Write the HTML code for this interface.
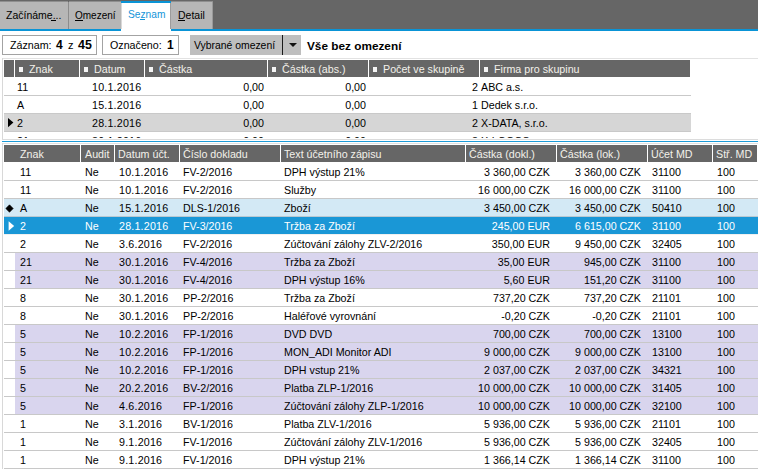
<!DOCTYPE html>
<html><head><meta charset="utf-8"><style>
*{margin:0;padding:0;box-sizing:border-box}
html,body{width:758px;height:469px;overflow:hidden;background:#fff}
body{position:relative;font-family:"Liberation Sans",sans-serif;font-size:10.7px;color:#000}
.a{position:absolute}
.t{position:absolute;white-space:nowrap;line-height:17px;height:17px}
.r{text-align:right}
.hd{color:#f3f1ea}
u{text-decoration:none;border-bottom:1px solid currentColor}
</style></head><body>
<div class="a" style="left:0px;top:0px;width:758px;height:29px;background:#666666;"></div>
<div class="a" style="left:0px;top:1px;width:68px;height:28px;background:#8e8e8e;"></div>
<div class="a" style="left:0px;top:2px;width:68px;height:27px;background:#b6b6b6;"></div>
<div class="a" style="left:68px;top:2px;width:1px;height:27px;background:#8c8c8c;"></div>
<div class="a" style="left:69px;top:1px;width:52px;height:28px;background:#8e8e8e;"></div>
<div class="a" style="left:69px;top:2px;width:52px;height:27px;background:#b6b6b6;"></div>
<div class="a" style="left:170px;top:1px;width:43px;height:28px;background:#8e8e8e;"></div>
<div class="a" style="left:171px;top:2px;width:41px;height:27px;background:#b6b6b6;"></div>
<div class="a" style="left:170px;top:2px;width:1px;height:27px;background:#9c9c9c;"></div>
<div class="a" style="left:212px;top:2px;width:1px;height:27px;background:#9a9a9a;"></div>
<div class="a" style="left:0px;top:29px;width:122px;height:2px;background:#0a94d6;"></div>
<div class="a" style="left:171px;top:29px;width:587px;height:2px;background:#0a94d6;"></div>
<div class="a" style="left:121px;top:1px;width:49px;height:30px;background:#ffffff;"></div>
<div class="a" style="left:121px;top:3px;width:1px;height:26px;background:#d8d8d8;"></div>
<div class="a" style="left:121px;top:1px;width:50px;height:2px;background:#0a94d6;"></div>
<div class="t" style="left:6px;top:7px;color:#000;font-size:10.5px">Začínáme...</div>
<div class="a" style="left:51px;top:20px;width:5px;height:1px;background:#000;"></div>
<div class="t" style="left:75px;top:7px;color:#000;font-size:10px">Omezení</div>
<div class="a" style="left:75px;top:20px;width:8px;height:1px;background:#000;"></div>
<div class="t" style="left:128px;top:6px;color:#1495d8;font-size:10.2px">Seznam</div>
<div class="a" style="left:140px;top:19px;width:5px;height:1px;background:#1495d8;"></div>
<div class="t" style="left:178px;top:7px;color:#000;font-size:10.5px">Detail</div>
<div class="a" style="left:178px;top:20px;width:7px;height:1px;background:#000;"></div>
<div class="a" style="left:2px;top:35px;width:95px;height:20px;background:#fff;border:1px solid #a3a3a3"></div>
<div class="t" style="left:10px;top:37px;">Záznam:</div>
<div class="t" style="left:56px;top:37px;font-size:12px"><b>4</b></div>
<div class="t" style="left:68px;top:37px;font-size:11px">z</div>
<div class="t" style="left:78px;top:37px;font-size:12.4px"><b>45</b></div>
<div class="a" style="left:102px;top:35px;width:77px;height:20px;background:#fff;border:1px solid #a3a3a3"></div>
<div class="t" style="left:110px;top:37px;">Označeno:</div>
<div class="t" style="left:167px;top:37px;font-size:12px"><b>1</b></div>
<div class="a" style="left:190px;top:35px;width:111px;height:20px;background:#bebebe;"></div>
<div class="a" style="left:282px;top:35px;width:1px;height:20px;background:#1a1a1a;"></div>
<div class="t" style="left:194px;top:37px;color:#000;font-size:10.4px">Vybrané omezení</div>
<svg class="a" style="left:289px;top:43px" width="8" height="5"><path d="M0 0H8L4 4Z" fill="#111"/></svg>
<div class="t" style="left:307px;top:38px;font-size:11.8px"><b>Vše bez omezení</b></div>
<div class="a" style="left:2px;top:58px;width:756px;height:1px;background:#e2e2e2;"></div>
<div class="a" style="left:2px;top:58px;width:1px;height:82px;background:#d8d8d8;"></div>
<div class="a" style="left:2px;top:139px;width:756px;height:1px;background:#dcdcdc;"></div>
<div class="a" style="left:4px;top:60px;width:686px;height:17px;background:#666666;"></div>
<div class="a" style="left:14px;top:60px;width:1px;height:17px;background:#ffffff;"></div>
<div class="a" style="left:79px;top:60px;width:1px;height:17px;background:#ffffff;"></div>
<div class="a" style="left:144px;top:60px;width:1px;height:17px;background:#ffffff;"></div>
<div class="a" style="left:267px;top:60px;width:1px;height:17px;background:#ffffff;"></div>
<div class="a" style="left:368px;top:60px;width:1px;height:17px;background:#ffffff;"></div>
<div class="a" style="left:479px;top:60px;width:1px;height:17px;background:#ffffff;"></div>
<div class="a" style="left:19px;top:67px;width:4px;height:5px;background:#f4f4f4;"></div>
<div class="t hd" style="left:29px;top:61px;">Znak</div>
<div class="a" style="left:84px;top:67px;width:4px;height:5px;background:#f4f4f4;"></div>
<div class="t hd" style="left:94px;top:61px;">Datum</div>
<div class="a" style="left:149px;top:67px;width:4px;height:5px;background:#f4f4f4;"></div>
<div class="t hd" style="left:159px;top:61px;">Částka</div>
<div class="a" style="left:272px;top:67px;width:4px;height:5px;background:#f4f4f4;"></div>
<div class="t hd" style="left:282px;top:61px;">Částka (abs.)</div>
<div class="a" style="left:373px;top:67px;width:4px;height:5px;background:#f4f4f4;"></div>
<div class="t hd" style="left:383px;top:61px;">Počet ve skupině</div>
<div class="a" style="left:484px;top:67px;width:4px;height:5px;background:#f4f4f4;"></div>
<div class="t hd" style="left:494px;top:61px;">Firma pro skupinu</div>
<div class="a" style="left:4px;top:114px;width:687px;height:18px;background:#d6d6d6;"></div>
<div class="a" style="left:4px;top:95px;width:687px;height:1px;background:#c9c9c9;"></div>
<div class="t" style="left:17px;top:79px;">11</div>
<div class="t" style="left:92px;top:79px;letter-spacing:0.2px">10.1.2016</div>
<div class="t r" style="left:64px;width:200px;top:79px;">0,00</div>
<div class="t r" style="left:166px;width:200px;top:79px;">0,00</div>
<div class="t r" style="left:278px;width:200px;top:79px;">2</div>
<div class="t" style="left:481px;top:79px;">ABC a.s.</div>
<div class="a" style="left:4px;top:113px;width:687px;height:1px;background:#c9c9c9;"></div>
<div class="t" style="left:17px;top:97px;">A</div>
<div class="t" style="left:92px;top:97px;letter-spacing:0.2px">15.1.2016</div>
<div class="t r" style="left:64px;width:200px;top:97px;">0,00</div>
<div class="t r" style="left:166px;width:200px;top:97px;">0,00</div>
<div class="t r" style="left:278px;width:200px;top:97px;">1</div>
<div class="t" style="left:481px;top:97px;">Dedek s.r.o.</div>
<div class="a" style="left:4px;top:131px;width:687px;height:1px;background:#c9c9c9;"></div>
<div class="t" style="left:17px;top:115px;">2</div>
<div class="t" style="left:92px;top:115px;letter-spacing:0.2px">28.1.2016</div>
<div class="t r" style="left:64px;width:200px;top:115px;">0,00</div>
<div class="t r" style="left:166px;width:200px;top:115px;">0,00</div>
<div class="t r" style="left:278px;width:200px;top:115px;">2</div>
<div class="t" style="left:481px;top:115px;">X-DATA, s.r.o.</div>
<div class="t" style="left:17px;top:133px;height:5px;overflow:hidden;">21</div>
<div class="t" style="left:92px;top:133px;height:5px;overflow:hidden;letter-spacing:0.2px">30.1.2016</div>
<div class="t r" style="left:64px;width:200px;top:133px;height:5px;overflow:hidden;">0,00</div>
<div class="t r" style="left:166px;width:200px;top:133px;height:5px;overflow:hidden;">0,00</div>
<div class="t r" style="left:278px;width:200px;top:133px;height:5px;overflow:hidden;">3</div>
<div class="t" style="left:481px;top:133px;height:5px;overflow:hidden;">X-LOGOS</div>
<svg class="a" style="left:8px;top:118px" width="6" height="10"><path d="M0 0L5.4 4.6L0 9.3Z" fill="#000"/></svg>
<div class="a" style="left:2px;top:141px;width:756px;height:1px;background:#1d9ad6;"></div>
<div class="a" style="left:2px;top:143px;width:756px;height:1px;background:#e2e2e2;"></div>
<div class="a" style="left:2px;top:143px;width:1px;height:326px;background:#d8d8d8;"></div>
<div class="a" style="left:4px;top:145px;width:753px;height:17px;background:#666666;"></div>
<div class="a" style="left:80px;top:145px;width:1px;height:17px;background:#ffffff;"></div>
<div class="a" style="left:114px;top:145px;width:1px;height:17px;background:#ffffff;"></div>
<div class="a" style="left:179px;top:145px;width:1px;height:17px;background:#ffffff;"></div>
<div class="a" style="left:280px;top:145px;width:1px;height:17px;background:#ffffff;"></div>
<div class="a" style="left:465px;top:145px;width:1px;height:17px;background:#ffffff;"></div>
<div class="a" style="left:556px;top:145px;width:1px;height:17px;background:#ffffff;"></div>
<div class="a" style="left:647px;top:145px;width:1px;height:17px;background:#ffffff;"></div>
<div class="a" style="left:712px;top:145px;width:1px;height:17px;background:#ffffff;"></div>
<div class="t hd" style="left:20px;top:146px;">Znak</div>
<div class="t hd" style="left:85px;top:146px;">Audit</div>
<div class="t hd" style="left:118px;top:146px;">Datum účt.</div>
<div class="t hd" style="left:183px;top:146px;">Číslo dokladu</div>
<div class="t hd" style="left:284px;top:146px;">Text účetního zápisu</div>
<div class="t hd" style="left:469px;top:146px;">Částka (dokl.)</div>
<div class="t hd" style="left:560px;top:146px;">Částka (lok.)</div>
<div class="t hd" style="left:651px;top:146px;">Účet MD</div>
<div class="t hd" style="left:716px;top:146px;">Stř. MD</div>
<div class="a" style="left:4px;top:180px;width:754px;height:1px;background:#c8c8c8;"></div>
<div class="t" style="left:20px;top:164px;color:#000">11</div>
<div class="t" style="left:85px;top:164px;color:#000">Ne</div>
<div class="t" style="left:119px;top:164px;color:#000;letter-spacing:0.2px">10.1.2016</div>
<div class="t" style="left:183px;top:164px;color:#000">FV-2/2016</div>
<div class="t" style="left:284px;top:164px;color:#000">DPH výstup 21%</div>
<div class="t r" style="left:350px;width:200px;top:164px;color:#000">3 360,00 CZK</div>
<div class="t r" style="left:441px;width:200px;top:164px;color:#000">3 360,00 CZK</div>
<div class="t" style="left:652px;top:164px;color:#000">31100</div>
<div class="t" style="left:717px;top:164px;color:#000">100</div>
<div class="a" style="left:4px;top:198px;width:754px;height:1px;background:#c8c8c8;"></div>
<div class="t" style="left:20px;top:182px;color:#000">11</div>
<div class="t" style="left:85px;top:182px;color:#000">Ne</div>
<div class="t" style="left:119px;top:182px;color:#000;letter-spacing:0.2px">10.1.2016</div>
<div class="t" style="left:183px;top:182px;color:#000">FV-2/2016</div>
<div class="t" style="left:284px;top:182px;color:#000">Služby</div>
<div class="t r" style="left:350px;width:200px;top:182px;color:#000">16 000,00 CZK</div>
<div class="t r" style="left:441px;width:200px;top:182px;color:#000">16 000,00 CZK</div>
<div class="t" style="left:652px;top:182px;color:#000">31100</div>
<div class="t" style="left:717px;top:182px;color:#000">100</div>
<div class="a" style="left:4px;top:199px;width:754px;height:17px;background:#d3e9f5;"></div>
<div class="a" style="left:4px;top:216px;width:754px;height:1px;background:#b9c9d2;"></div>
<div class="t" style="left:20px;top:200px;color:#000">A</div>
<div class="t" style="left:85px;top:200px;color:#000">Ne</div>
<div class="t" style="left:119px;top:200px;color:#000;letter-spacing:0.2px">15.1.2016</div>
<div class="t" style="left:183px;top:200px;color:#000">DLS-1/2016</div>
<div class="t" style="left:284px;top:200px;color:#000">Zboží</div>
<div class="t r" style="left:350px;width:200px;top:200px;color:#000">3 450,00 CZK</div>
<div class="t r" style="left:441px;width:200px;top:200px;color:#000">3 450,00 CZK</div>
<div class="t" style="left:652px;top:200px;color:#000">50410</div>
<div class="t" style="left:717px;top:200px;color:#000">100</div>
<svg class="a" style="left:5px;top:204px" width="9" height="9"><path d="M4.5 0.8L8.2 4.5L4.5 8.2L0.8 4.5Z" fill="#000" stroke="#000" stroke-width="0.6" stroke-linejoin="round"/></svg>
<div class="a" style="left:4px;top:217px;width:754px;height:17px;background:#1a97d6;"></div>
<div class="a" style="left:4px;top:234px;width:754px;height:1px;background:#f0f0f0;"></div>
<div class="t" style="left:20px;top:218px;color:#fff">2</div>
<div class="t" style="left:85px;top:218px;color:#fff">Ne</div>
<div class="t" style="left:119px;top:218px;color:#fff;letter-spacing:0.2px">28.1.2016</div>
<div class="t" style="left:183px;top:218px;color:#fff">FV-3/2016</div>
<div class="t" style="left:284px;top:218px;color:#fff">Tržba za Zboží</div>
<div class="t r" style="left:350px;width:200px;top:218px;color:#fff">245,00 EUR</div>
<div class="t r" style="left:441px;width:200px;top:218px;color:#fff">6 615,00 CZK</div>
<div class="t" style="left:652px;top:218px;color:#fff">31100</div>
<div class="t" style="left:717px;top:218px;color:#fff">100</div>
<svg class="a" style="left:8px;top:221px" width="7" height="11"><path d="M0.6 0.3L6.2 5L0.6 9.7Z" fill="#fff"/></svg>
<div class="a" style="left:4px;top:252px;width:754px;height:1px;background:#c8c8c8;"></div>
<div class="t" style="left:20px;top:236px;color:#000">2</div>
<div class="t" style="left:85px;top:236px;color:#000">Ne</div>
<div class="t" style="left:119px;top:236px;color:#000;letter-spacing:0.2px">3.6.2016</div>
<div class="t" style="left:183px;top:236px;color:#000">FV-2/2016</div>
<div class="t" style="left:284px;top:236px;color:#000">Zúčtování zálohy ZLV-2/2016</div>
<div class="t r" style="left:350px;width:200px;top:236px;color:#000">350,00 EUR</div>
<div class="t r" style="left:441px;width:200px;top:236px;color:#000">9 450,00 CZK</div>
<div class="t" style="left:652px;top:236px;color:#000">32405</div>
<div class="t" style="left:717px;top:236px;color:#000">100</div>
<div class="a" style="left:15px;top:253px;width:743px;height:17px;background:#d9d5ee;"></div>
<div class="a" style="left:4px;top:270px;width:754px;height:1px;background:#c8c8c8;"></div>
<div class="t" style="left:20px;top:254px;color:#000">21</div>
<div class="t" style="left:85px;top:254px;color:#000">Ne</div>
<div class="t" style="left:119px;top:254px;color:#000;letter-spacing:0.2px">30.1.2016</div>
<div class="t" style="left:183px;top:254px;color:#000">FV-4/2016</div>
<div class="t" style="left:284px;top:254px;color:#000">Tržba za Zboží</div>
<div class="t r" style="left:350px;width:200px;top:254px;color:#000">35,00 EUR</div>
<div class="t r" style="left:441px;width:200px;top:254px;color:#000">945,00 CZK</div>
<div class="t" style="left:652px;top:254px;color:#000">31100</div>
<div class="t" style="left:717px;top:254px;color:#000">100</div>
<div class="a" style="left:15px;top:271px;width:743px;height:17px;background:#d9d5ee;"></div>
<div class="a" style="left:4px;top:288px;width:754px;height:1px;background:#c8c8c8;"></div>
<div class="t" style="left:20px;top:272px;color:#000">21</div>
<div class="t" style="left:85px;top:272px;color:#000">Ne</div>
<div class="t" style="left:119px;top:272px;color:#000;letter-spacing:0.2px">30.1.2016</div>
<div class="t" style="left:183px;top:272px;color:#000">FV-4/2016</div>
<div class="t" style="left:284px;top:272px;color:#000">DPH výstup 16%</div>
<div class="t r" style="left:350px;width:200px;top:272px;color:#000">5,60 EUR</div>
<div class="t r" style="left:441px;width:200px;top:272px;color:#000">151,20 CZK</div>
<div class="t" style="left:652px;top:272px;color:#000">31100</div>
<div class="t" style="left:717px;top:272px;color:#000">100</div>
<div class="a" style="left:4px;top:306px;width:754px;height:1px;background:#c8c8c8;"></div>
<div class="t" style="left:20px;top:290px;color:#000">8</div>
<div class="t" style="left:85px;top:290px;color:#000">Ne</div>
<div class="t" style="left:119px;top:290px;color:#000;letter-spacing:0.2px">30.1.2016</div>
<div class="t" style="left:183px;top:290px;color:#000">PP-2/2016</div>
<div class="t" style="left:284px;top:290px;color:#000">Tržba za Zboží</div>
<div class="t r" style="left:350px;width:200px;top:290px;color:#000">737,20 CZK</div>
<div class="t r" style="left:441px;width:200px;top:290px;color:#000">737,20 CZK</div>
<div class="t" style="left:652px;top:290px;color:#000">21101</div>
<div class="t" style="left:717px;top:290px;color:#000">100</div>
<div class="a" style="left:4px;top:324px;width:754px;height:1px;background:#c8c8c8;"></div>
<div class="t" style="left:20px;top:308px;color:#000">8</div>
<div class="t" style="left:85px;top:308px;color:#000">Ne</div>
<div class="t" style="left:119px;top:308px;color:#000;letter-spacing:0.2px">30.1.2016</div>
<div class="t" style="left:183px;top:308px;color:#000">PP-2/2016</div>
<div class="t" style="left:284px;top:308px;color:#000">Haléřové vyrovnání</div>
<div class="t r" style="left:350px;width:200px;top:308px;color:#000">-0,20 CZK</div>
<div class="t r" style="left:441px;width:200px;top:308px;color:#000">-0,20 CZK</div>
<div class="t" style="left:652px;top:308px;color:#000">21101</div>
<div class="t" style="left:717px;top:308px;color:#000">100</div>
<div class="a" style="left:15px;top:325px;width:743px;height:17px;background:#d9d5ee;"></div>
<div class="a" style="left:4px;top:342px;width:754px;height:1px;background:#c8c8c8;"></div>
<div class="t" style="left:20px;top:326px;color:#000">5</div>
<div class="t" style="left:85px;top:326px;color:#000">Ne</div>
<div class="t" style="left:119px;top:326px;color:#000;letter-spacing:0.2px">10.2.2016</div>
<div class="t" style="left:183px;top:326px;color:#000">FP-1/2016</div>
<div class="t" style="left:284px;top:326px;color:#000">DVD DVD</div>
<div class="t r" style="left:350px;width:200px;top:326px;color:#000">700,00 CZK</div>
<div class="t r" style="left:441px;width:200px;top:326px;color:#000">700,00 CZK</div>
<div class="t" style="left:652px;top:326px;color:#000">13100</div>
<div class="t" style="left:717px;top:326px;color:#000">100</div>
<div class="a" style="left:15px;top:343px;width:743px;height:17px;background:#d9d5ee;"></div>
<div class="a" style="left:4px;top:360px;width:754px;height:1px;background:#c8c8c8;"></div>
<div class="t" style="left:20px;top:344px;color:#000">5</div>
<div class="t" style="left:85px;top:344px;color:#000">Ne</div>
<div class="t" style="left:119px;top:344px;color:#000;letter-spacing:0.2px">10.2.2016</div>
<div class="t" style="left:183px;top:344px;color:#000">FP-1/2016</div>
<div class="t" style="left:284px;top:344px;color:#000">MON_ADI Monitor ADI</div>
<div class="t r" style="left:350px;width:200px;top:344px;color:#000">9 000,00 CZK</div>
<div class="t r" style="left:441px;width:200px;top:344px;color:#000">9 000,00 CZK</div>
<div class="t" style="left:652px;top:344px;color:#000">13100</div>
<div class="t" style="left:717px;top:344px;color:#000">100</div>
<div class="a" style="left:15px;top:361px;width:743px;height:17px;background:#d9d5ee;"></div>
<div class="a" style="left:4px;top:378px;width:754px;height:1px;background:#c8c8c8;"></div>
<div class="t" style="left:20px;top:362px;color:#000">5</div>
<div class="t" style="left:85px;top:362px;color:#000">Ne</div>
<div class="t" style="left:119px;top:362px;color:#000;letter-spacing:0.2px">10.2.2016</div>
<div class="t" style="left:183px;top:362px;color:#000">FP-1/2016</div>
<div class="t" style="left:284px;top:362px;color:#000">DPH vstup 21%</div>
<div class="t r" style="left:350px;width:200px;top:362px;color:#000">2 037,00 CZK</div>
<div class="t r" style="left:441px;width:200px;top:362px;color:#000">2 037,00 CZK</div>
<div class="t" style="left:652px;top:362px;color:#000">34321</div>
<div class="t" style="left:717px;top:362px;color:#000">100</div>
<div class="a" style="left:15px;top:379px;width:743px;height:17px;background:#d9d5ee;"></div>
<div class="a" style="left:4px;top:396px;width:754px;height:1px;background:#c8c8c8;"></div>
<div class="t" style="left:20px;top:380px;color:#000">5</div>
<div class="t" style="left:85px;top:380px;color:#000">Ne</div>
<div class="t" style="left:119px;top:380px;color:#000;letter-spacing:0.2px">20.2.2016</div>
<div class="t" style="left:183px;top:380px;color:#000">BV-2/2016</div>
<div class="t" style="left:284px;top:380px;color:#000">Platba ZLP-1/2016</div>
<div class="t r" style="left:350px;width:200px;top:380px;color:#000">10 000,00 CZK</div>
<div class="t r" style="left:441px;width:200px;top:380px;color:#000">10 000,00 CZK</div>
<div class="t" style="left:652px;top:380px;color:#000">31405</div>
<div class="t" style="left:717px;top:380px;color:#000">100</div>
<div class="a" style="left:15px;top:397px;width:743px;height:17px;background:#d9d5ee;"></div>
<div class="a" style="left:4px;top:414px;width:754px;height:1px;background:#c8c8c8;"></div>
<div class="t" style="left:20px;top:398px;color:#000">5</div>
<div class="t" style="left:85px;top:398px;color:#000">Ne</div>
<div class="t" style="left:119px;top:398px;color:#000;letter-spacing:0.2px">4.6.2016</div>
<div class="t" style="left:183px;top:398px;color:#000">FP-1/2016</div>
<div class="t" style="left:284px;top:398px;color:#000">Zúčtování zálohy ZLP-1/2016</div>
<div class="t r" style="left:350px;width:200px;top:398px;color:#000">10 000,00 CZK</div>
<div class="t r" style="left:441px;width:200px;top:398px;color:#000">10 000,00 CZK</div>
<div class="t" style="left:652px;top:398px;color:#000">32100</div>
<div class="t" style="left:717px;top:398px;color:#000">100</div>
<div class="a" style="left:4px;top:432px;width:754px;height:1px;background:#c8c8c8;"></div>
<div class="t" style="left:20px;top:416px;color:#000">1</div>
<div class="t" style="left:85px;top:416px;color:#000">Ne</div>
<div class="t" style="left:119px;top:416px;color:#000;letter-spacing:0.2px">3.1.2016</div>
<div class="t" style="left:183px;top:416px;color:#000">BV-1/2016</div>
<div class="t" style="left:284px;top:416px;color:#000">Platba ZLV-1/2016</div>
<div class="t r" style="left:350px;width:200px;top:416px;color:#000">5 936,00 CZK</div>
<div class="t r" style="left:441px;width:200px;top:416px;color:#000">5 936,00 CZK</div>
<div class="t" style="left:652px;top:416px;color:#000">21101</div>
<div class="t" style="left:717px;top:416px;color:#000">100</div>
<div class="a" style="left:4px;top:450px;width:754px;height:1px;background:#c8c8c8;"></div>
<div class="t" style="left:20px;top:434px;color:#000">1</div>
<div class="t" style="left:85px;top:434px;color:#000">Ne</div>
<div class="t" style="left:119px;top:434px;color:#000;letter-spacing:0.2px">9.1.2016</div>
<div class="t" style="left:183px;top:434px;color:#000">FV-1/2016</div>
<div class="t" style="left:284px;top:434px;color:#000">Zúčtování zálohy ZLV-1/2016</div>
<div class="t r" style="left:350px;width:200px;top:434px;color:#000">5 936,00 CZK</div>
<div class="t r" style="left:441px;width:200px;top:434px;color:#000">5 936,00 CZK</div>
<div class="t" style="left:652px;top:434px;color:#000">32405</div>
<div class="t" style="left:717px;top:434px;color:#000">100</div>
<div class="a" style="left:4px;top:468px;width:754px;height:1px;background:#c8c8c8;"></div>
<div class="t" style="left:20px;top:452px;color:#000">1</div>
<div class="t" style="left:85px;top:452px;color:#000">Ne</div>
<div class="t" style="left:119px;top:452px;color:#000;letter-spacing:0.2px">9.1.2016</div>
<div class="t" style="left:183px;top:452px;color:#000">FV-1/2016</div>
<div class="t" style="left:284px;top:452px;color:#000">DPH výstup 21%</div>
<div class="t r" style="left:350px;width:200px;top:452px;color:#000">1 366,14 CZK</div>
<div class="t r" style="left:441px;width:200px;top:452px;color:#000">1 366,14 CZK</div>
<div class="t" style="left:652px;top:452px;color:#000">31100</div>
<div class="t" style="left:717px;top:452px;color:#000">100</div>
</body></html>
